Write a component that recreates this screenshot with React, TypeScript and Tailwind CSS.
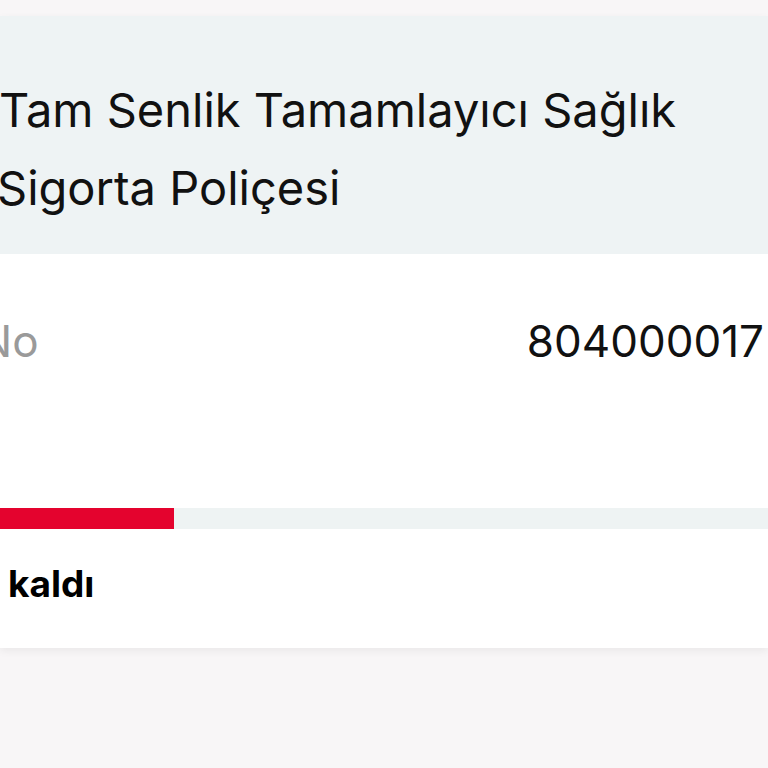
import React from "react";

const policy = {
  title: ["Tam Senlik Tamamlayıcı Sağlık", "Sigorta Poliçesi"],
  label: "No",
  number: "804000017",
  progress: 174,
  remaining: "kaldı",
};

export default function App() {
  return (
    <div
      className="w-[768px] h-[768px] overflow-hidden bg-[#f8f6f7] pt-[16px]"
      style={{ fontFamily: "Inter, 'Noto Sans', sans-serif" }}
    >
      <div className="bg-white shadow-[0_3px_8px_rgba(0,0,0,0.06)]">
        {/* Başlık alanı */}
        <div className="bg-[#eef3f4] pt-[55px] pb-[27px] pr-[40px] whitespace-nowrap">
          <h1 className="text-[47px] leading-[78px] font-normal text-[#111]">
            <span className="block -ml-[1px]">{policy.title[0]}</span>
            <span className="block -ml-[3px]">{policy.title[1]}</span>
          </h1>
        </div>

        {/* Poliçe numarası */}
        <div className="flex items-start justify-between whitespace-nowrap pt-[65px] pb-[145px] text-[44px] leading-[44px]">
          <span className="text-[#9a9a9a] -ml-[21px]">{policy.label}</span>
          <span className="text-[#111] mr-[4px]">{policy.number}</span>
        </div>

        {/* İlerleme çubuğu */}
        <div className="h-[21px] bg-[#eef3f3]">
          <div className="h-full bg-[#e4032e]" style={{ width: policy.progress }} />
        </div>

        <div className="pt-[37px] pb-[46px] pl-[8px]">
          <span className="block text-[37px] leading-[36px] font-bold text-black">
            {policy.remaining}
          </span>
        </div>
      </div>
    </div>
  );
}
